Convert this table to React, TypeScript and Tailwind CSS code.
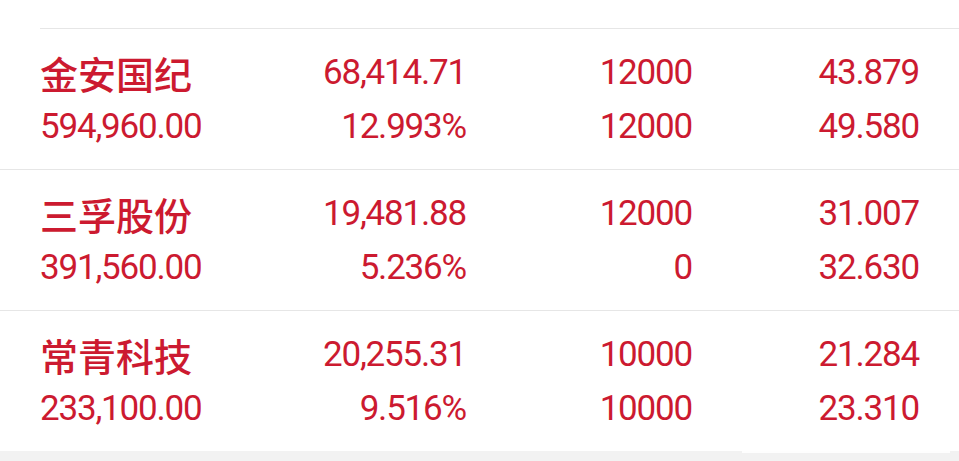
import React from "react";

type Holding = {
  name: string;
  value: string;
  profit: string;
  ratio: string;
  qty: string;
  avail: string;
  price: string;
  cost: string;
};

const HOLDINGS: Holding[] = [
  {
    name: "金安国纪",
    value: "594,960.00",
    profit: "68,414.71",
    ratio: "12.993%",
    qty: "12000",
    avail: "12000",
    price: "43.879",
    cost: "49.580",
  },
  {
    name: "三孚股份",
    value: "391,560.00",
    profit: "19,481.88",
    ratio: "5.236%",
    qty: "12000",
    avail: "0",
    price: "31.007",
    cost: "32.630",
  },
  {
    name: "常青科技",
    value: "233,100.00",
    profit: "20,255.31",
    ratio: "9.516%",
    qty: "10000",
    avail: "10000",
    price: "21.284",
    cost: "23.310",
  },
];

const num =
  "font-['Roboto',sans-serif] text-[35px] tracking-[-1.2px] leading-[54px] whitespace-nowrap";

function Row({ h, first }: { h: Holding; first: boolean }) {
  return (
    <div className={first ? "pl-[40px]" : ""}>
      <div
        className={`grid grid-cols-[1fr_226px_226px_227px] pt-[17px] pb-[15px] pr-[40px] border-t border-[#e6e6e6] ${
          first ? "" : "pl-[40px]"
        }`}
      >
        <div className="flex flex-col">
          <span className="font-['Noto_Sans_CJK_SC',sans-serif] font-medium text-[38px] leading-[54px] whitespace-nowrap">
            {h.name}
          </span>
          <span className={num}>{h.value}</span>
        </div>
        <div className="flex flex-col items-end">
          <span className={num}>{h.profit}</span>
          <span className={num}>{h.ratio}</span>
        </div>
        <div className="flex flex-col items-end">
          <span className={num}>{h.qty}</span>
          <span className={num}>{h.avail}</span>
        </div>
        <div className="flex flex-col items-end">
          <span className={num}>{h.price}</span>
          <span className={num}>{h.cost}</span>
        </div>
      </div>
    </div>
  );
}

export default function App() {
  return (
    <div className="w-[959px] h-[461px] bg-white text-[#cc1a30] overflow-hidden flex flex-col relative">
      <div className="h-[28px] shrink-0" />
      {HOLDINGS.map((h, i) => (
        <Row key={h.name} h={h} first={i === 0} />
      ))}
      <div className="flex-1 bg-[#f2f2f2]" />

      {/* watermark smear */}
      <div className="absolute left-[742px] top-[424px] w-[208px] h-[29px] bg-gradient-to-b from-white/20 via-white/75 to-white/95" />
    </div>
  );
}
